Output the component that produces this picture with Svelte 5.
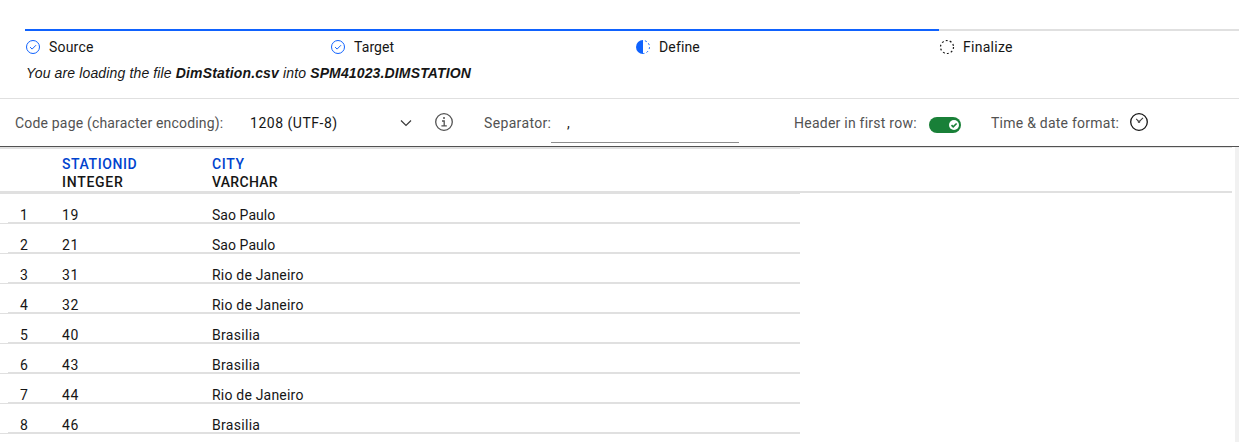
<script>
  const steps = [
    { label: 'Source', state: 'done', width: 305, ls: 0.2 },
    { label: 'Target', state: 'done', width: 305, ls: 0.1 },
    { label: 'Define', state: 'current', width: 304, ls: 0.15 },
    { label: 'Finalize', state: 'todo', width: 300, ls: 0.28 }
  ];
  const columns = [
    { name: 'STATIONID', type: 'INTEGER', lsName: 0.58, lsType: 0.72 },
    { name: 'CITY', type: 'VARCHAR', lsName: 0.65, lsType: 0.28 }
  ];
  const spacing = { 'Sao Paulo': 0.05, 'Rio de Janeiro': 0.2, Brasilia: 0.3 };
  const rows = [
    [19, 'Sao Paulo'],
    [21, 'Sao Paulo'],
    [31, 'Rio de Janeiro'],
    [32, 'Rio de Janeiro'],
    [40, 'Brasilia'],
    [43, 'Brasilia'],
    [44, 'Rio de Janeiro'],
    [46, 'Brasilia']
  ];
</script>

<main>
  <header>
    <ol>
      {#each steps as step}
        <li class={step.state} style:width="{step.width}px">
          <svg width="16" height="16" viewBox="0 0 16 16" fill="none">
            {#if step.state === 'done'}
              <circle cx="8" cy="8" r="6.5" />
              <path d="M5.1 8.1 7.1 10.1 11 6.2" />
            {:else if step.state === 'current'}
              <path d="M8 1a7 7 0 0 0 0 14z" fill="currentColor" stroke="none" />
              <path d="M8 1.5a6.5 6.5 0 0 1 0 13" stroke-dasharray="1.9 2.2" stroke-dashoffset="-2" />
            {:else}
              <circle cx="8" cy="8" r="6.5" stroke-width="1.2" stroke-dasharray="1.9 2.184" />
            {/if}
          </svg>
          <span style:letter-spacing="{step.ls}px">{step.label}</span>
        </li>
      {/each}
    </ol>
    <p>You are loading the file <b>DimStation.csv</b> into <b>SPM41023.DIMSTATION</b></p>
  </header>

  <section class="toolbar">
    <span class="label code">Code page (character encoding):</span>
    <div class="select">
      <span>1208 (UTF-8)</span>
      <svg width="12" height="8" viewBox="0 0 12 8" fill="none" stroke="#393939" stroke-width="1.2"><path d="M1 1.5 6 6.5 11 1.5" /></svg>
    </div>
    <svg class="info" width="20" height="20" viewBox="0 0 20 20" fill="none" stroke="#525252" stroke-width="1.3">
      <circle cx="10" cy="10" r="8.3" />
      <path d="M8 9h2.2v4.8M7.4 13.9h5.4" />
      <circle cx="10" cy="6.1" r="1" fill="#525252" stroke="none" />
    </svg>
    <span class="label sep">Separator:</span>
    <div class="field">,</div>
    <span class="label head">Header in first row:</span>
    <div class="toggle">
      <svg width="10" height="10" viewBox="0 0 10 10"><circle cx="5" cy="5" r="5" fill="#fff" /><path d="M2.5 5.1 4.2 6.8 7.6 3.5" fill="none" stroke="#198038" stroke-width="1.6" /></svg>
    </div>
    <span class="label time">Time &amp; date format:</span>
    <svg class="clock" width="20" height="20" viewBox="0 0 20 20" fill="none" stroke="#161616" stroke-width="1.3">
      <circle cx="10" cy="10" r="8.3" />
      <path d="M7.2 6.9 10 9.8 14 5.8" stroke="#393939" stroke-width="1.1" />
      <circle cx="10" cy="9.8" r="1.3" fill="#525252" stroke="none" />
    </svg>
  </section>

  <section class="preview">
    <div class="grid">
      <div class="thead">
        <div class="columns">
          {#each columns as col}
            <div class="col">
              <span class="name" style:letter-spacing="{col.lsName}px">{col.name}</span>
              <span style:letter-spacing="{col.lsType}px">{col.type}</span>
            </div>
          {/each}
        </div>
      </div>
      <div class="body">
        {#each rows as [id, city], i}
          <div class="row">
            <div class="num">{i + 1}</div>
            <div class="cells">
              <span class="id">{id}</span>
              <span style:letter-spacing="{spacing[city]}px">{city}</span>
            </div>
          </div>
        {/each}
      </div>
    </div>
    <div class="track"></div>
  </section>
</main>

<style>
  :global(body) { margin: 0; background: #fff; }
  main {
    box-sizing: border-box;
    width: 1239px;
    height: 444px;
    padding-top: 29px;
    overflow: hidden;
    font: 14px/18px Roboto, "Noto Sans", sans-serif;
    color: #161616;
    background: #fff;
  }
  header { height: 69px; padding-left: 25px; }
  ol { display: flex; margin: 0; padding: 0; list-style: none; }
  li {
    box-sizing: border-box;
    flex: none;
    display: flex;
    height: 29px;
    padding-top: 8px;
    border-top: 2px solid #0f62fe;
    white-space: nowrap;
  }
  li.todo { border-color: #e0e0e0; }
  li svg { flex: none; margin-right: 8px; color: #0f62fe; stroke: currentColor; stroke-width: 1; }
  li span { margin-top: -1px; }
  li.todo svg { color: #161616; }
  p {
    margin: 6px 0 0 1px;
    font: italic 14px/18px "Liberation Sans", Arial, sans-serif;
    letter-spacing: 0.14px;
    white-space: nowrap;
  }
  .toolbar {
    box-sizing: border-box;
    display: flex;
    align-items: flex-start;
    height: 49px;
    padding: 15px 0 0 15px;
    border-top: 1px solid #e0e0e0;
    border-bottom: 1px solid #525252;
    white-space: nowrap;
  }
  .toolbar > * { flex: none; }
  .label { color: #525252; }
  .code { width: 235px; letter-spacing: 0.18px; }
  .select { display: flex; width: 184px; letter-spacing: 0.52px; }
  .select span { width: 150px; }
  .select svg { margin-top: 5px; }
  .info { margin: -2px 30px 0 0; }
  .sep { width: 67px; letter-spacing: 0.35px; }
  .field {
    box-sizing: border-box;
    width: 188px;
    height: 29px;
    padding-left: 16px;
    border-bottom: 1px solid #8d8d8d;
  }
  .head { width: 135px; margin-left: 55px; letter-spacing: 0.24px; }
  .toggle {
    box-sizing: border-box;
    display: flex;
    justify-content: flex-end;
    width: 32px;
    height: 16px;
    padding: 3px 2px;
    margin: 3px 30px 0 0;
    border-radius: 8px;
    background: #198038;
  }
  .time { width: 138px; letter-spacing: 0.24px; }
  .clock { margin-top: -2px; }
  .preview { display: flex; height: 295px; }
  .grid { width: 1232px; margin-right: 3px; }
  .thead {
    box-sizing: border-box;
    height: 46px;
    border-top: 1px solid #e0e0e0;
    border-bottom: 2px solid #e0e0e0;
  }
  .columns {
    box-sizing: border-box;
    display: flex;
    width: 800px;
    height: 43px;
    padding: 6px 0 0 62px;
    border-top: 1px solid #e0e0e0;
    font-weight: 500;
  }
  .col { display: flex; flex-direction: column; width: 150px; }
  .name { color: #0043ce; }
  .body { width: 800px; border-top: 1px solid #e0e0e0; }
  .row { display: flex; height: 30px; }
  .num, .cells { box-sizing: border-box; height: 30px; padding-top: 12px; }
  .num { flex: none; width: 8px; text-indent: 20px; border-bottom: 1px solid #e0e0e0; }
  .cells { display: flex; width: 792px; padding-left: 54px; border-bottom: 2px solid #e0e0e0; }
  .id { width: 150px; letter-spacing: 0.55px; }
  .track { width: 4px; background: #f1f1f1; }
</style>
